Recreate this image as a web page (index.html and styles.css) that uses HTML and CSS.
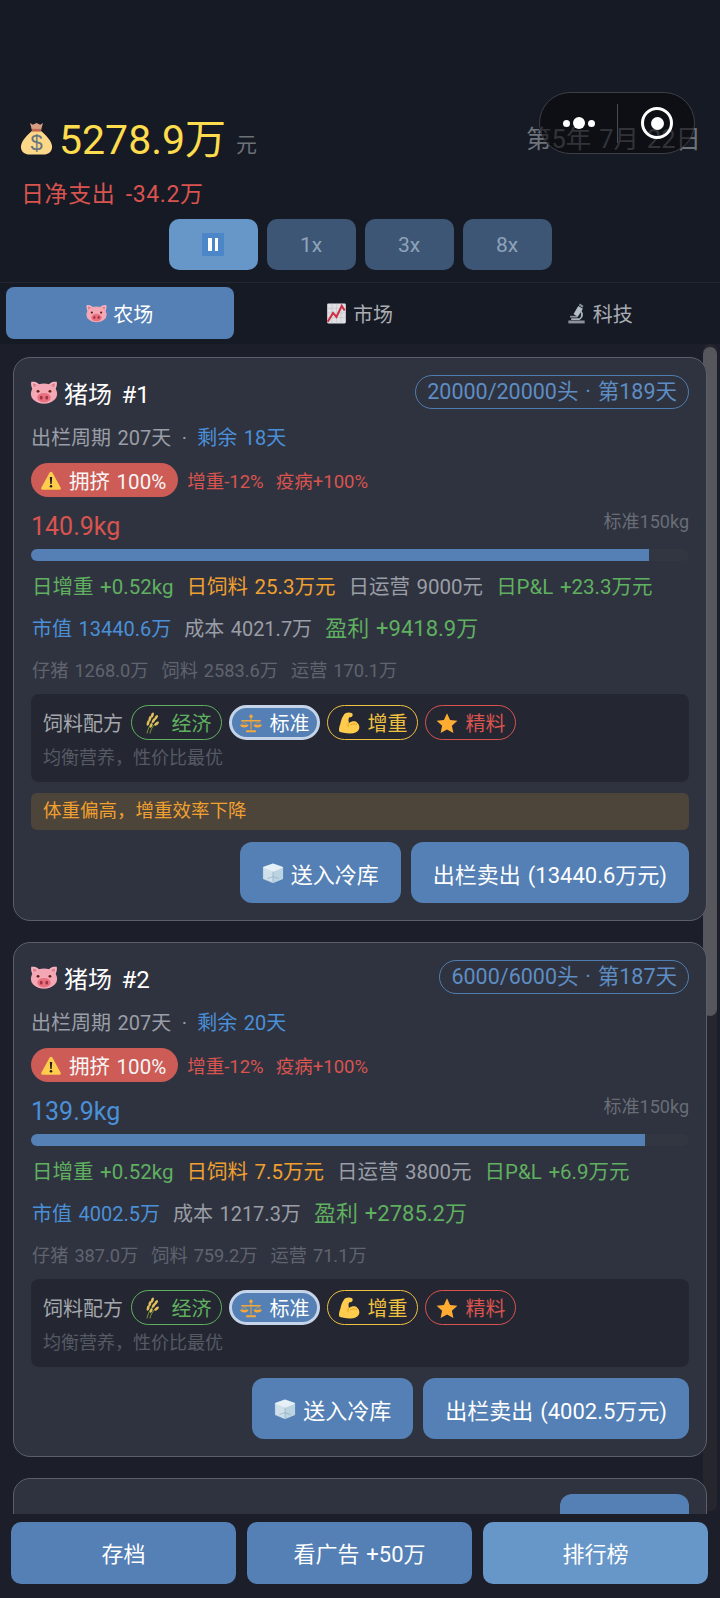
FILE: index.html
```html
<!DOCTYPE html>
<html lang="zh">
<head>
    <meta charset="UTF-8">
    <meta name="viewport" content="width=device-width, initial-scale=1.0">
    <title>养猪场</title>
    <link rel="stylesheet" href="styles.css">
</head>
<body>
    <svg class="defs" width="0" height="0">
        <defs>
            <symbol id="i-pig" viewBox="1 3 34 29">
                <path d="M2 4c5-1 10 2 11 5l-7 8C3 14 1 8 2 4zM34 4c-5-1-10 2-11 5l7 8c3-3 5-9 4-13z" fill="#f7b4c0"/>
                <path d="M4 6c3 0 6 2 7 4l-4 5C5 12 4 9 4 6z" fill="#e0808f"/>
                <path d="M32 6c-3 0-6 2-7 4l4 5c2-3 3-6 3-9z" fill="#e0808f"/>
                <ellipse cx="18" cy="19" rx="16.500" ry="12.800" fill="#f4a8b6"/>
                <circle cx="10.500" cy="16" r="1.800" fill="#662113"/>
                <circle cx="25.500" cy="16" r="1.800" fill="#662113"/>
                <ellipse cx="18" cy="24" rx="8.500" ry="6" fill="#e8707f"/>
                <ellipse cx="14.500" cy="24" rx="1.800" ry="2.400" fill="#9c3346"/>
                <ellipse cx="21.500" cy="24" rx="1.800" ry="2.400" fill="#9c3346"/>
            </symbol>
            <symbol id="i-bag" viewBox="0 0 36 36">
                <path d="M11 1l3 2 4-2 4 2 3-2-2 8H13z" fill="#d99e82"/>
                <path d="M14 9h8c6 5 13 12 13 18 0 6-5 8.500-9 8.500H10c-4 0-9-2.500-9-8.500 0-6 7-13 13-18z" fill="#fdd888"/>
                <path d="M13 7.500h10v3H13z" fill="#bf6952"/>
                <text x="18" y="30" text-anchor="middle" class="bag-sign">$</text>
            </symbol>
            <symbol id="i-warn" viewBox="0 0 36 36">
                <path d="M18 3c1 0 2 .6 2.600 1.600l14 26c1 2-.2 3.400-2.200 3.400H3.600c-2 0-3.200-1.400-2.200-3.400l14-26C16 3.600 17 3 18 3z" fill="#ffcc4d"/>
                <path d="M16 12h4l-.8 12h-2.400z" fill="#231f20"/>
                <circle cx="18" cy="28" r="2.200" fill="#231f20"/>
            </symbol>
            <symbol id="i-rice" viewBox="0 0 36 36">
                <path d="M8 35c2-8 5-14 10-20M13 35c1-6 4-11 9-16" stroke="#7a9a3a" stroke-width="1.600" fill="none"/>
                <g fill="#e3c15a">
                    <ellipse cx="10" cy="18" rx="2.200" ry="4.500" transform="rotate(15 10 18)"/>
                    <ellipse cx="13" cy="11" rx="2.200" ry="4.500" transform="rotate(15 13 11)"/>
                    <ellipse cx="17" cy="5" rx="2.200" ry="4.500" transform="rotate(20 17 5)"/>
                    <ellipse cx="19" cy="14" rx="2.200" ry="4.500" transform="rotate(35 19 14)"/>
                    <ellipse cx="23" cy="9" rx="2.200" ry="4.500" transform="rotate(35 23 9)"/>
                    <ellipse cx="24" cy="19" rx="2.200" ry="4.500" transform="rotate(50 24 19)"/>
                    <ellipse cx="15" cy="22" rx="2" ry="4" transform="rotate(25 15 22)"/>
                </g>
            </symbol>
            <symbol id="i-scale" viewBox="0 0 36 36">
                <path d="M17 6h2v23h-2z" fill="#d99e3c"/>
                <path d="M10 30h16v3H10zM2 13h32v2.400H2z" fill="#f4a83c"/>
                <circle cx="18" cy="7" r="2.800" fill="#f4a83c"/>
                <path d="M0 21h14c-1 3-3 4.500-7 4.500S1 24 0 21zM22 21h14c-1 3-3 4.500-7 4.500S23 24 22 21z" fill="#f4a83c"/>
                <path d="M7 15L1.500 21H3l4-4.500 4 4.500h1.500zM29 15l-5.500 6H25l4-4.500 4 4.500h1.500z" fill="#d99e3c"/>
            </symbol>
            <symbol id="i-arm" viewBox="0 0 36 36">
                <path d="M12 2c3-1.500 8-1.500 11 0 2 2 1 5-1 6l-4 1c-1 3-1 6 0 9 4-3 10-4 13-1 4 3 5 8 3 12-2 4-7 6-14 6-8 0-15-1-18-3-1-3 0-8 2-13 1-6 4-14 8-17z" fill="#ffcc4d"/>
                <path d="M17 18c-1 2-1 5 0 7M31 21c-3-2-8-2-11 0" stroke="#e09f1f" stroke-width="1.500" fill="none"/>
            </symbol>
            <symbol id="i-star" viewBox="0 0 36 36">
                <path d="M18 2l5 11 12 1.400-9 8.200 2.500 11.800L18 28.500 7.500 34.400 10 22.600 1 14.400 13 13z" fill="#ffac33"/>
            </symbol>
            <symbol id="i-ice" viewBox="0 0 36 36">
                <path d="M18 4l15 5v18l-15 6-15-6V9z" fill="#bcd4e2" stroke="#bcd4e2" stroke-width="3" stroke-linejoin="round"/>
                <path d="M18 4l15 5-15 6-15-6z" fill="#e6f0f6" stroke="#e6f0f6" stroke-width="2" stroke-linejoin="round"/>
                <path d="M3 10l15 6v17L3 27z" fill="#d0e0ea"/>
                <path d="M18 16v17M9 27l9-3 9 3" stroke="#8aa6b8" stroke-width="1" fill="none"/>
            </symbol>
        </defs>
    </svg>

    <div class="app">
        <header class="topbar">
            <div class="money-row">
                <div class="money">
                    <svg class="icon-bag"><use href="#i-bag"/></svg>
                    <span class="money-num">5278.9万</span>
                    <span class="money-unit">元</span>
                </div>
                <div class="date">第5年 7月 22日</div>
            </div>
            <div class="net">日净支出 -34.2万</div>
            <div class="speeds">
                <button class="speed active"><span class="pause"><i></i><i></i></span></button>
                <button class="speed">1x</button>
                <button class="speed">3x</button>
                <button class="speed">8x</button>
            </div>
        </header>

        <!-- WeChat capsule sits over the header -->
        <div class="capsule">
            <div class="dots"><i></i><i class="big"></i><i></i></div>
            <div class="capsule-line"></div>
            <div class="target"><i></i></div>
        </div>

        <nav class="tabs">
            <div class="tab active"><svg class="icon-tab"><use href="#i-pig"/></svg>农场</div>
            <div class="tab">
                <svg class="icon-tab" viewBox="0 0 36 36">
                    <rect x="2" y="1" width="32" height="34" rx="2" fill="#dfe1e4"/>
                    <path d="M2 9h32M2 17h32M2 25h32M10 1v34M18 1v34M26 1v34" stroke="#b8bcc2" stroke-width=".8"/>
                    <path d="M3 32l9-15 6 7 9-19 5 8" stroke="#d02e44" stroke-width="3.500" fill="none"/>
                </svg>市场
            </div>
            <div class="tab">
                <svg class="icon-tab" viewBox="0 0 36 36">
                    <path d="M4 30h28v5H4z" fill="#8a9198"/>
                    <path d="M21 5l8 5-9 14-7-5z" fill="#b4bcc4"/>
                    <path d="M24 1l6 4-2 3-6-4z" fill="#8a9198"/>
                    <path d="M26 13c5 5 4 13-3 16H9v-3h14c3-2 4-7 1-11z" fill="#a8b0b8"/>
                    <path d="M7 22h13v3H7z" fill="#8a9198"/>
                </svg>科技
            </div>
        </nav>

        <main class="list">
            <section class="card">
                <div class="card-head">
                    <div class="card-title"><svg class="icon-title"><use href="#i-pig"/></svg>猪场 #1</div>
                    <div class="count">20000/20000头 · 第189天</div>
                </div>
                <div class="cycle">出栏周期 207天 <span class="dot">·</span> <span class="blue">剩余 18天</span></div>
                <div class="crowd-row">
                    <span class="crowd"><svg class="icon-warn"><use href="#i-warn"/></svg>拥挤 100%</span>
                    <span class="effects">增重-12%&nbsp; 疫病+100%</span>
                </div>
                <div class="weight-row">
                    <span class="weight red">140.9kg</span>
                    <span class="standard">标准150kg</span>
                </div>
                <div class="bar"><div class="bar-fill" style="width: 93.9%"></div></div>
                <div class="stats">
                    <span class="green">日增重 +0.52kg</span>
                    <span class="orange">日饲料 25.3万元</span>
                    <span class="grey">日运营 9000元</span>
                    <span class="green">日P&amp;L +23.3万元</span>
                </div>
                <div class="stats value">
                    <span class="blue">市值 13440.6万</span>
                    <span class="grey">成本 4021.7万</span>
                    <span class="green profit">盈利 +9418.9万</span>
                </div>
                <div class="costs">
                    <span>仔猪 1268.0万</span>
                    <span>饲料 2583.6万</span>
                    <span>运营 170.1万</span>
                </div>
                <div class="feed">
                    <div class="feed-row">
                        <span class="feed-label">饲料配方</span>
                        <span class="pill p-eco"><svg class="icon-pill"><use href="#i-rice"/></svg>经济</span>
                        <span class="pill p-std"><svg class="icon-pill"><use href="#i-scale"/></svg>标准</span>
                        <span class="pill p-gain"><svg class="icon-pill"><use href="#i-arm"/></svg>增重</span>
                        <span class="pill p-fine"><svg class="icon-pill"><use href="#i-star"/></svg>精料</span>
                    </div>
                    <div class="feed-hint">均衡营养，性价比最优</div>
                </div>
                <div class="notice">体重偏高，增重效率下降</div>
                <div class="actions">
                    <button class="btn"><svg class="icon-ice"><use href="#i-ice"/></svg>送入冷库</button>
                    <button class="btn">出栏卖出 (13440.6万元)</button>
                </div>
            </section>

            <section class="card">
                <div class="card-head">
                    <div class="card-title"><svg class="icon-title"><use href="#i-pig"/></svg>猪场 #2</div>
                    <div class="count">6000/6000头 · 第187天</div>
                </div>
                <div class="cycle">出栏周期 207天 <span class="dot">·</span> <span class="blue">剩余 20天</span></div>
                <div class="crowd-row">
                    <span class="crowd"><svg class="icon-warn"><use href="#i-warn"/></svg>拥挤 100%</span>
                    <span class="effects">增重-12%&nbsp; 疫病+100%</span>
                </div>
                <div class="weight-row">
                    <span class="weight blue">139.9kg</span>
                    <span class="standard">标准150kg</span>
                </div>
                <div class="bar"><div class="bar-fill" style="width: 93.3%"></div></div>
                <div class="stats">
                    <span class="green">日增重 +0.52kg</span>
                    <span class="orange">日饲料 7.5万元</span>
                    <span class="grey">日运营 3800元</span>
                    <span class="green">日P&amp;L +6.9万元</span>
                </div>
                <div class="stats value">
                    <span class="blue">市值 4002.5万</span>
                    <span class="grey">成本 1217.3万</span>
                    <span class="green profit">盈利 +2785.2万</span>
                </div>
                <div class="costs">
                    <span>仔猪 387.0万</span>
                    <span>饲料 759.2万</span>
                    <span>运营 71.1万</span>
                </div>
                <div class="feed">
                    <div class="feed-row">
                        <span class="feed-label">饲料配方</span>
                        <span class="pill p-eco"><svg class="icon-pill"><use href="#i-rice"/></svg>经济</span>
                        <span class="pill p-std"><svg class="icon-pill"><use href="#i-scale"/></svg>标准</span>
                        <span class="pill p-gain"><svg class="icon-pill"><use href="#i-arm"/></svg>增重</span>
                        <span class="pill p-fine"><svg class="icon-pill"><use href="#i-star"/></svg>精料</span>
                    </div>
                    <div class="feed-hint">均衡营养，性价比最优</div>
                </div>
                <div class="actions">
                    <button class="btn"><svg class="icon-ice"><use href="#i-ice"/></svg>送入冷库</button>
                    <button class="btn">出栏卖出 (4002.5万元)</button>
                </div>
            </section>

            <section class="card card-third">
                <div class="card-head end">
                    <button class="btn btn-build"></button>
                </div>
            </section>

            <div class="scroll-track"><div class="scroll-thumb"></div></div>
        </main>

        <footer class="footer">
            <button class="foot-btn">存档</button>
            <button class="foot-btn">看广告 +50万</button>
            <button class="foot-btn light">排行榜</button>
        </footer>
    </div>
</body>
</html>
```

FILE: styles.css
```css
* {
    box-sizing: border-box;
}
html, body {
    margin: 0;
    padding: 0;
}
body {
    font-family: Roboto, "Noto Sans CJK SC", sans-serif;
    background: #1c1e29;
    color: #fff;
    word-spacing: 1.500px;
}
button {
    font-family: inherit;
    word-spacing: inherit;
    border: none;
    color: #fff;
}
.defs {
    position: absolute;
}
.bag-sign {
    font-size: 24px;
    fill: #67757f;
    font-family: "Liberation Sans", sans-serif;
}
.app {
    position: relative;
    width: 720px;
    height: 1598px;
    display: flex;
    flex-direction: column;
    overflow: hidden;
}

/* top bar */
.topbar {
    background: #161a24;
    height: 282px;
    padding: 110px 22px 0 20px;
    flex: none;
}
.money-row {
    display: flex;
    justify-content: space-between;
    align-items: center;
    height: 52px;
    margin-right: -3px;
}
.money {
    display: flex;
    align-items: center;
}
.icon-bag {
    width: 33px;
    height: 37px;
    margin: 4px 6px 0 0;
}
.money-num {
    font-size: 41px;
    color: #fddc4e;
}
.money-unit {
    font-size: 21px;
    color: #6d7178;
    margin: 14px 0 0 10px;
}
.date {
    font-size: 25.500px;
    color: #6f737a;
}
.net {
    color: #d9534f;
    font-size: 23px;
    line-height: 30px;
    letter-spacing: 0.6px;
    word-spacing: 4px;
    margin: 18px 0 0 1px;
}
.speeds {
    display: flex;
    justify-content: center;
    gap: 9px;
    margin: 9px 0 0 2px;
}
.speed {
    width: 89px;
    height: 51px;
    border-radius: 10px;
    background: #3d5675;
    color: #8fa3ba;
    font-size: 21px;
    display: flex;
    align-items: center;
    justify-content: center;
}
.speed.active {
    background: #6796c8;
}
.pause {
    width: 22px;
    height: 23px;
    background: #4a86c8;
    display: flex;
    align-items: center;
    justify-content: center;
    gap: 3px;
}
.pause i {
    width: 3.500px;
    height: 13px;
    background: #fff;
}

/* wechat capsule */
.capsule {
    position: absolute;
    left: 539px;
    top: 92px;
    width: 156px;
    height: 62px;
    border-radius: 31px;
    border: 1.500px solid #3d3f47;
    background: rgba(8, 9, 12, 0.6);
    display: flex;
    align-items: center;
}
.dots {
    width: 77px;
    display: flex;
    align-items: center;
    justify-content: center;
    gap: 3px;
    padding-left: 1px;
}
.dots i {
    width: 7px;
    height: 7px;
    border-radius: 50%;
    background: #fff;
}
.dots .big {
    width: 12px;
    height: 12px;
}
.capsule-line {
    width: 1px;
    height: 39px;
    background: #4a4c54;
}
.target {
    width: 32px;
    height: 32px;
    margin-left: 23px;
    border: 3.500px solid #fff;
    border-radius: 50%;
    display: flex;
    align-items: center;
    justify-content: center;
}
.target i {
    width: 13px;
    height: 13px;
    border-radius: 50%;
    background: #fff;
}

/* tabs */
.tabs {
    flex: none;
    height: 62px;
    background: #161a24;
    border-top: 1px solid #232630;
    display: flex;
    padding: 4px 1px 0 0;
}
.tab {
    flex: 1;
    height: 52px;
    margin: 0 5.500px;
    border-radius: 8px;
    font-size: 20px;
    color: #a9adb3;
    display: flex;
    align-items: center;
    justify-content: center;
    gap: 6px;
}
.tab.active {
    background: #5480b5;
    color: #fff;
}
.icon-tab {
    width: 21px;
    height: 21px;
}

/* farm cards */
.list {
    position: relative;
    flex: 1;
    min-height: 0;
    padding: 13px 13.500px 0 13px;
    overflow: hidden;
}
.card {
    position: relative;
    z-index: 1;
    background: #2f333f;
    border: 1.500px solid #5c5f6b;
    border-radius: 17px;
    padding: 16px 16.500px 17px 17px;
    margin-bottom: 21px;
}
.card-head {
    display: flex;
    justify-content: space-between;
    align-items: center;
    height: 38px;
    margin-bottom: 1px;
}
.card-head.end {
    justify-content: flex-end;
}
.card-title {
    display: flex;
    align-items: center;
    font-size: 24px;
    word-spacing: 3.500px;
    color: #fff;
    margin-top: -1px;
}
.icon-title {
    width: 28px;
    height: 23px;
    margin: 0 6px 0 -1px;
}
.count {
    font-size: 21.500px;
    line-height: 32px;
    color: #5e8dc4;
    border: 1.500px solid #4f7cb0;
    border-radius: 17px;
    padding: 0 11px;
    margin-top: -2px;
}
.cycle {
    font-size: 20px;
    line-height: 30px;
    color: #9a9ea6;
    margin-top: 11px;
}
.dot {
    margin: 0 4px;
}
.blue {
    color: #4a90d9;
}
.red {
    color: #d9534f;
}
.green {
    color: #5fb05f;
}
.orange {
    color: #f0a030;
}
.grey {
    color: #9a9ea6;
}
.crowd-row {
    display: flex;
    align-items: center;
    margin-top: 10px;
}
.crowd {
    height: 34px;
    border-radius: 17px;
    background: #cd5c56;
    font-size: 20.500px;
    padding: 0 12px 0 9px;
    display: flex;
    align-items: center;
    color: #f6f6f6;
}
.icon-warn {
    width: 22px;
    height: 21px;
    margin-right: 7px;
}
.effects {
    color: #d9534f;
    font-size: 18.500px;
    margin-left: 9px;
}
.weight-row {
    display: flex;
    justify-content: space-between;
    align-items: flex-start;
    margin-top: 12px;
    height: 40px;
}
.weight {
    font-size: 25px;
    line-height: 36px;
}
.standard {
    font-size: 18px;
    line-height: 28px;
    color: #696d76;
    margin-top: -1px;
}
.bar {
    height: 12px;
    background: #323641;
    border-radius: 6px;
}
.bar-fill {
    height: 12px;
    background: #5480b5;
    border-radius: 6px 0 0 6px;
}
.stats {
    display: flex;
    gap: 13px;
    font-size: 20.500px;
    line-height: 30px;
    margin: 11px 0 0 1px;
}
.stats.value {
    align-items: center;
    margin-top: 12px;
    font-size: 20px;
}
.profit {
    font-size: 22px;
}
.costs {
    display: flex;
    gap: 13px;
    font-size: 18.200px;
    line-height: 26px;
    color: #60646f;
    margin: 14px 0 0 1px;
}
.feed {
    background: #242732;
    border-radius: 8px;
    padding: 11px 12px 10px;
    margin-top: 10px;
    height: 88px;
}
.feed-row {
    display: flex;
    align-items: center;
    gap: 7px;
}
.feed-label {
    font-size: 20px;
    color: #a4a8ae;
    margin-right: 1px;
}
.pill {
    width: 91px;
    height: 35px;
    border-radius: 18px;
    border: 1.500px solid;
    font-size: 20px;
    display: flex;
    align-items: center;
    justify-content: center;
    gap: 8px;
}
.icon-pill {
    width: 22px;
    height: 22px;
}
.p-eco {
    color: #5fb05f;
    border-color: #5fb05f;
}
.p-std {
    color: #fff;
    background: #5480b5;
    border: 3px solid #c5d4e8;
}
.p-gain {
    color: #f0c040;
    border-color: #f0c040;
}
.p-fine {
    color: #d9534f;
    border-color: #d9534f;
}
.feed-hint {
    font-size: 18px;
    line-height: 26px;
    color: #565a65;
    margin-top: 5px;
}
.notice {
    height: 37px;
    line-height: 37px;
    margin-top: 11px;
    padding-left: 12px;
    border-radius: 6px;
    background: #4d443a;
    color: #f0a030;
    font-size: 18.500px;
}
.actions {
    display: flex;
    justify-content: flex-end;
    gap: 10px;
    margin-top: 12px;
}
.feed + .actions {
    margin-top: 11px;
}
.btn {
    height: 61px;
    border-radius: 12px;
    background: #5480b5;
    font-size: 22px;
    padding: 0 22px;
    display: flex;
    align-items: center;
}
.icon-ice {
    width: 22px;
    height: 22px;
    margin-right: 7px;
}
.btn-build {
    width: 129px;
    margin-top: 21px;
}
.scroll-track {
    position: absolute;
    right: 3px;
    top: 0;
    bottom: 3px;
    width: 14px;
    border-radius: 7px;
    background: #26272e;
}
.scroll-thumb {
    height: 669px;
    margin-top: 3px;
    border-radius: 7px;
    background: #56575d;
}

/* bottom buttons */
.footer {
    flex: none;
    height: 84px;
    background: #1c1e29;
    display: flex;
    gap: 11px;
    padding: 8px 12px 0 11px;
}
.foot-btn {
    flex: 1;
    height: 62px;
    border-radius: 10px;
    background: #5480b5;
    font-size: 22px;
    padding-bottom: 3px;
}
.foot-btn.light {
    background: #6796c8;
}
```
